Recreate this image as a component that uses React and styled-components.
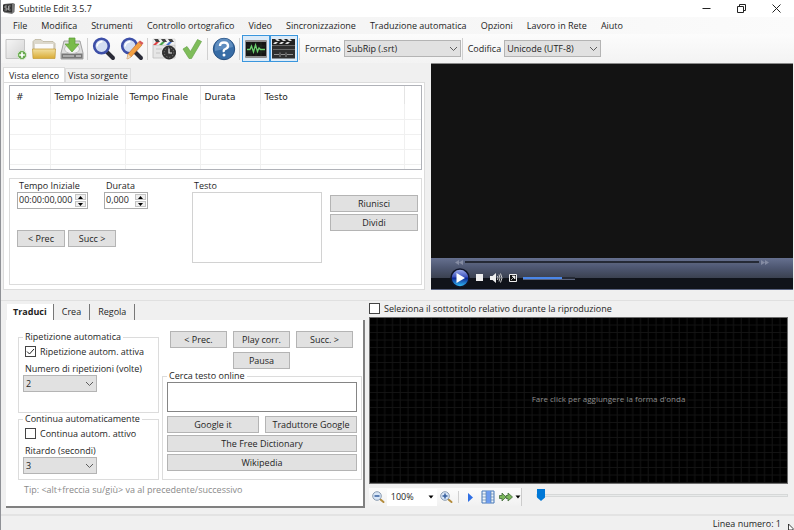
import React, { useState } from 'react'
import styled, { createGlobalStyle, css } from 'styled-components'

const GlobalStyle = createGlobalStyle`
    * {
        box-sizing: border-box;
    }

    body {
        margin: 0;
        background: #f0f0f0;
    }

    body, button, input, select, textarea {
        font-family: 'Open Sans', 'Noto Sans', sans-serif;
        font-size: 9px;
        line-height: 12px;
        color: #1e1e1e;
    }
`

const Window = styled.div`
    position: relative;
    display: flex;
    flex-direction: column;
    min-height: 100vh;
    border-left: 1px solid #8f9196;
    background: #f0f0f0;
    overflow: hidden;
`

const TitleBar = styled.header`
    display: flex;
    align-items: center;
    height: 17px;
    padding-left: 2px;
    background: #fff;
`

const Title = styled.h1`
    flex: 1;
    margin: 0 0 0 4px;
    font-size: 9px;
    font-weight: 400;
`

const WindowButton = styled.button`
    display: flex;
    align-items: center;
    justify-content: center;
    width: 35px;
    height: 15px;
    padding: 0;
    border: 0;
    background: none;
`

const MenuBar = styled.nav`
    display: flex;
    align-items: center;
    height: 17px;
    padding-left: 5px;
    background: linear-gradient(90deg, #f0f0f0, #fbfbfb);
`

const MenuItem = styled.button`
    padding: 0 7px;
    border: 0;
    background: none;
    white-space: nowrap;
`

const Toolbar = styled.div`
    display: flex;
    align-items: center;
    height: 29px;
    padding-left: 1px;
    background: linear-gradient(#fcfcfc, #f3f3f3);
`

const ToolButton = styled.button`
    display: flex;
    flex: none;
    align-items: center;
    justify-content: center;
    width: 28px;
    height: 27px;
    padding: 0;
    border: 1px solid ${p => (p.$active ? '#3a96dd' : 'transparent')};
    background: ${p => (p.$active ? '#dcebf8' : 'none')};
`

const Separator = styled.span`
    flex: none;
    width: 1px;
    height: 22px;
    margin: 0 2px 0 1px;
    background: #d0d0d0;
`

const ToolLabel = styled.label`
    margin: 0 3px;
    white-space: nowrap;
`

const SelectWrap = styled.span`
    display: grid;
    flex: none;
    width: ${p => p.$width}px;

    > * {
        grid-area: 1 / 1;
    }

    svg {
        align-self: center;
        justify-self: end;
        margin-right: 3px;
        pointer-events: none;
    }
`

const NativeSelect = styled.select`
    appearance: none;
    width: 100%;
    height: 17px;
    padding: 0 2px;
    border: 1px solid #b4b4b4;
    border-radius: 0;
    background: #e1e1e1;
`

const Upper = styled.section`
    display: grid;
    grid-template-columns: 422fr 362fr;
    column-gap: 6px;
    padding: 0 1px 0 2px;
`

const ListSide = styled.div`
    display: flex;
    flex-direction: column;
    min-width: 0;
    padding-top: 4px;
`

const TabRow = styled.div`
    display: flex;
    align-items: flex-end;
    height: 15px;
`

const Tab = styled.button`
    height: ${p => (p.$active ? 16 : 14)}px;
    margin-bottom: ${p => (p.$active ? -1 : 0)}px;
    padding: 0 ${p => (p.$active ? 5 : 2)}px;
    border: 1px solid #dcdcdc;
    border-bottom: 0;
    background: ${p => (p.$active ? '#fff' : '#f0f0f0')};
    white-space: nowrap;
`

const TabPanel = styled.div`
    display: flex;
    flex: 1;
    flex-direction: column;
    gap: 8px;
    padding: 2px 2px 4px 5px;
    border: 1px solid #dcdcdc;
    background: #fff;
`

const TableFrame = styled.div`
    height: 85px;
    border: 1px solid #b0b2b8;
    overflow: hidden;
`

const Table = styled.table`
    width: 100%;
    border-collapse: collapse;
    table-layout: fixed;

    th, td {
        padding: 0 4px;
        border-right: 1px solid #f0f0f0;
        text-align: left;
    }

    th:first-child {
        padding-left: 6px;
    }

    th:last-child, td:last-child {
        border-right: 0;
    }

    th {
        height: 18px;
        padding-top: 3px;
        border-color: #e4e4e4;
        font-family: 'DejaVu Sans', sans-serif;
        font-size: 9px;
        font-weight: 400;
        white-space: nowrap;
    }

    td {
        height: 15px;
        border-bottom: 1px solid #f0f0f0;
    }
`

const EditPanel = styled.div`
    display: grid;
    flex: 1;
    grid-template-columns: 167px minmax(0, 1fr) 88px;
    column-gap: 8px;
    min-height: 107px;
    padding: 1px 3px 0 7px;
    border: 1px solid #dcdcdc;
`

const TimeFields = styled.div`
    display: flex;
    gap: 16px;
`

const Field = styled.div`
    display: flex;
    flex-direction: column;

    > label {
        height: 12px;
        padding-left: 2px;
        white-space: nowrap;
    }
`

const Spinner = styled.span`
    display: flex;
    width: ${p => p.$width}px;
    height: 17px;
    padding: 0 1px;
    border: 1px solid #ababab;
    background: #fff;

    input {
        flex: 1;
        min-width: 0;
        padding: 0 0 2px;
        border: 0;
        outline: 0;
    }
`

const SpinButtons = styled.span`
    display: flex;
    flex-direction: column;
    gap: 1px;
    padding: 1px 0;

    button {
        display: flex;
        flex: 1;
        align-items: center;
        justify-content: center;
        width: 11px;
        padding: 0;
        border: 1px solid #c4c4c4;
        background: #eee;
    }
`

const Button = styled.button`
    height: 17px;
    padding: 0 2px;
    border: 1px solid #b4b4b4;
    background: #e1e1e1;
    white-space: nowrap;
    ${p => p.$width && css`width: ${p.$width}px;`}
`

const ButtonRow = styled.div`
    display: flex;
    gap: 3px;
    margin-top: 21px;
`

const ButtonStack = styled.div`
    display: flex;
    flex-direction: column;
    gap: 2px;
    padding-top: 15px;
`

const TextArea = styled.textarea`
    height: 71px;
    border: 1px solid #d2d2d2;
    outline: 0;
    resize: none;
`

const Video = styled.div`
    display: flex;
    flex-direction: column;
    border-top: 1px solid #8a8a8a;
    border-bottom: 1px solid #5a6482;
    background: #131313;
`

const Screen = styled.div`
    flex: 1;
    min-height: 120px;
`

const Player = styled.div`
    height: 31px;
    padding: 0 24px;
    background: linear-gradient(#66708f 0, #4d5670 10px, #3b4150 20px, #10131a 20px, #10131a);
`

const SeekRow = styled.div`
    display: flex;
    align-items: center;
    gap: 2px;
    height: 9px;
`

const Range = styled.input`
    appearance: none;
    flex: ${p => (p.$width ? 'none' : 1)};
    width: ${p => (p.$width ? `${p.$width}px` : 'auto')};
    min-width: 0;
    height: 3px;
    margin: 0;
    border-bottom: 1px solid #59627b;
    background: linear-gradient(90deg, #4a86e8 ${p => p.value}%, #252a36 ${p => p.value}%);

    &::-webkit-slider-thumb {
        appearance: none;
        width: 1px;
        height: 1px;
    }
`

const PlayerRow = styled.div`
    display: flex;
    align-items: center;
    gap: 6px;
    height: 22px;
    margin-left: -5px;
`

const PlayerButton = styled.button`
    display: flex;
    padding: 0;
    border: 0;
    background: none;
`

const Lower = styled.section`
    display: grid;
    flex: 1;
    grid-template-columns: 359px minmax(0, 1fr);
    column-gap: 4px;
    margin-top: 10px;
    padding: 1px 6px 6px 5px;
    border-top: 1px solid #e0e0e0;
`

const Work = styled.div`
    display: flex;
    flex-direction: column;
    padding-top: 2px;
`

const WorkTabs = styled.div`
    display: flex;
    height: 16px;
    padding-left: 1px;
`

const WorkTab = styled.button`
    padding: 0 ${p => (p.$active ? 6 : 8)}px;
    border: 0;
    border-right: 1px solid #777;
    background: ${p => (p.$active ? '#fff' : 'none')};
    font-weight: ${p => (p.$active ? 700 : 400)};
    white-space: nowrap;
`

const WorkPanel = styled.div`
    display: flex;
    flex: 1;
    flex-direction: column;
    padding: 11px 3px 0 12px;
    border: solid #808080;
    border-width: 0 2px 2px 0;
    background: #fff;
`

const WorkColumns = styled.div`
    display: grid;
    grid-template-columns: 141px 200px;
    column-gap: 3px;
`

const Column = styled.div`
    display: flex;
    flex-direction: column;
`

const CheckLabel = styled.label`
    display: flex;
    align-items: center;
    gap: 4px;
    height: 13px;
    white-space: nowrap;
`

const Group = styled.fieldset`
    display: flex;
    flex-direction: column;
    align-items: ${p => (p.$stretch ? 'stretch' : 'flex-start')};
    height: ${p => p.$height}px;
    min-width: 0;
    margin: 0;
    padding: 0 4px;
    border: 1px solid #dcdcdc;

    legend {
        height: 12px;
        padding: 0 2px;
        white-space: nowrap;
    }

    ${CheckLabel} {
        margin: 2px 0 0 2px;
    }
`

const Check = styled.input`
    appearance: none;
    width: 11px;
    height: 11px;
    margin: 0;
    border: 1px solid #444;
    background: #fff;

    &:checked {
        background: #fff
            url("data:image/svg+xml,%3Csvg xmlns='http://www.w3.org/2000/svg' viewBox='0 0 9 9'%3E%3Cpath d='M1 4.5 3.5 7 8 2' fill='none' stroke='%23222'/%3E%3C/svg%3E");
    }
`

const FieldLabel = styled.label`
    margin: 5px 0 0 2px;
    white-space: nowrap;
`

const PlayGrid = styled.div`
    display: grid;
    grid-template-columns: repeat(3, 57px);
    gap: 3px 6px;
    padding-left: 8px;
    height: 39px;

    > :last-child {
        grid-column: 2;
    }
`

const SearchBox = styled.input`
    width: 100%;
    height: 30px;
    margin: 0 0 4px;
    border: 1px solid #858585;
    outline: 0;
`

const SearchGrid = styled.div`
    display: grid;
    grid-template-columns: 1fr 1fr;
    gap: 2px 6px;

    > :nth-child(n + 3) {
        grid-column: 1 / 3;
    }
`

const Tip = styled.p`
    margin: 4px 0 0 6px;
    color: #8a8a8a;
`

const WaveSide = styled.div`
    display: flex;
    flex-direction: column;
    min-width: 0;
`

const Waveform = styled.div`
    display: grid;
    flex: 1;
    min-height: 120px;
    margin-top: 2px;
    border: 1px solid #6d6d6d;
    background: #000;

    > * {
        grid-area: 1 / 1;
        place-self: center;
    }

    svg {
        place-self: stretch;
        width: 100%;
        height: 100%;
    }
`

const WaveHint = styled.p`
    z-index: 1;
    margin: 0;
    padding: 0 0 4px 60px;
    font-size: 8px;
    color: #8c8c8c;
`

const WaveControls = styled.div`
    display: flex;
    align-items: center;
    gap: 14px;
    height: 24px;
    padding-top: 2px;
`

const WaveBar = styled.div`
    display: flex;
    align-items: center;
    flex: none;
    width: 153px;
    height: 18px;
    border-right: 1px solid #ccc;
    background: linear-gradient(#fcfcfc, #f1f1f1);

    ${Separator} {
        height: 12px;
        margin: 0 3px;
    }
`

const WaveButton = styled.button`
    display: flex;
    align-items: center;
    justify-content: center;
    width: 18px;
    height: 18px;
    padding: 0;
    border: 0;
    background: none;
`

const ZoomWrap = styled(SelectWrap)`
    ${NativeSelect} {
        border: 0;
        background: #fff;
        padding: 0 4px;
    }
`

const Position = styled.input`
    appearance: none;
    flex: 1;
    min-width: 0;
    height: 3px;
    margin: 0 0 4px;
    border: 1px solid #d6d8d8;
    background: #e8eaea;

    &::-webkit-slider-thumb {
        appearance: none;
        width: 8px;
        height: 12px;
        background: #0078d7;
        clip-path: polygon(0 0, 100% 0, 100% 70%, 50% 100%, 0 70%);
    }
`

const StatusBar = styled.footer`
    display: flex;
    align-items: center;
    justify-content: flex-end;
    height: 16px;
    padding: 2px 13px 0 0;
    border-top: 2px solid #e3e3e3;
`

const Pointer = styled.svg`
    position: absolute;
    right: 0;
    bottom: 0;
`

const Chevron = () => (
    <svg width="9" height="6" viewBox="0 0 9 6">
        <path d="M1 1 4.5 4.500 8 1" fill="none" stroke="#5c5c5c" strokeWidth="1" />
    </svg>
)

const SmallArrow = () => (
    <svg width="6" height="4" viewBox="0 0 6 4">
        <path d="M.5.5h5L3 3.5Z" fill="#000" />
    </svg>
)

const AppIcon = () => (
    <svg width="12" height="11" viewBox="0 0 12 11">
        <path d="M1 1 10 0 12 1 11.5 9 9 11 1 9.500Z" fill="#777" />
        <path d="M0 1.500 9 1 9 9.500 0 8.500Z" fill="#333" />
        <path d="M4 3H2V5H4V7H1.500M7.500 3H5.500V7H7.500M5.500 5H7" fill="none" stroke="#bbb" strokeWidth=".8" />
    </svg>
)

const NewIcon = () => (
    <svg width="24" height="24" viewBox="0 0 24 24">
        <defs>
            <linearGradient id="paper" x2="1" y2="1">
                <stop stopColor="#f6f6f6" />
                <stop offset="1" stopColor="#d2d2d2" />
            </linearGradient>
        </defs>
        <path d="M2 2.500H20.500V21.500H2Z" fill="url(#paper)" stroke="#c4c4c4" />
        <circle cx="18" cy="18" r="4.500" fill="#67a94e" stroke="#d9ecd2" />
        <path d="M18 15.200V20.800M15.200 18H20.800" stroke="#fff" strokeWidth="1.700" />
    </svg>
)

const OpenIcon = () => (
    <svg width="26" height="24" viewBox="0 0 26 24">
        <defs>
            <linearGradient id="folder" x2="0" y2="1">
                <stop stopColor="#f2e0a0" />
                <stop offset="1" stopColor="#d9ab35" />
            </linearGradient>
        </defs>
        <path d="M2 13V4.500L4 2.500H10L12 4.500H22L24 6.500V13Z" fill="#dcd8cc" stroke="#b5ad94" strokeWidth=".7" />
        <path d="M4 7H22V13H4Z" fill="#fafafa" />
        <path d="M1.500 12H24.500L24 21.500H2Z" fill="url(#folder)" stroke="#c29a35" strokeWidth=".7" />
    </svg>
)

const SaveIcon = () => (
    <svg width="24" height="24" viewBox="0 0 24 24">
        <path d="M4 4H20L23 16V22H1V16Z" fill="#dedede" stroke="#8f8f8f" strokeWidth=".8" />
        <path d="M1.500 16.500H22.500V21.500H1.500Z" fill="#777" />
        <path d="M3 18H14V20H3Z" fill="#aaa" />
        <path d="M16 19H21" stroke="#ddd" strokeWidth="1.200" />
        <ellipse cx="12" cy="12" rx="7.500" ry="4.500" fill="#f4f4f4" stroke="#b6b6b6" strokeWidth=".8" />
        <path d="M9 1H15V7H19L12 15 5 7H9Z" fill="#79bb4b" stroke="#5a9b35" strokeWidth=".7" />
    </svg>
)

const Lens = () => (
    <>
        <path d="m15 15 6 6" stroke="#2a2b38" strokeWidth="4" strokeLinecap="round" />
        <circle cx="9.500" cy="9" r="7.300" fill="#d3def2" stroke="#3d4fa8" strokeWidth="2.600" />
        <path d="M5 9.500Q5.500 5 10.500 4.500" fill="none" stroke="#fff" strokeWidth="1.500" />
    </>
)

const FindIcon = () => (
    <svg width="24" height="24" viewBox="0 0 24 24">
        <Lens />
    </svg>
)

const ReplaceIcon = () => (
    <svg width="24" height="24" viewBox="0 0 24 24">
        <Lens />
        <path d="M18.500 5 22 8 11 20 7 22 8 17Z" fill="#f3a041" stroke="#b9652a" strokeWidth=".6" />
        <path d="m18.500 5 1.500-1.500L23.500 6 22 8Z" fill="#d75858" />
        <path d="m8 17 3 3-4 2Z" fill="#eddaba" />
    </svg>
)

const SyncIcon = () => (
    <svg width="26" height="24" viewBox="0 0 26 24">
        <path d="M2 8H24V21H2Z" fill="#e6e6e6" stroke="#bcbcbc" strokeWidth=".8" />
        <path d="M2 2H24V8H2Z" fill="#f4f4f4" stroke="#ccc" strokeWidth=".6" />
        <path d="M3 2H7L9 5H5ZM10 2H14L16 5H12ZM17 2H21L23 5H19Z" fill="#444" />
        <path d="M2 8 5 5H8L5 8Z" fill="#d44" />
        <path d="M8 8 11 5H14L11 8Z" fill="#49a34a" />
        <path d="M15 8 18 5H21L18 8Z" fill="#4573cc" />
        <path d="M5 12H11M5 16H9" stroke="#c4c4c4" />
        <circle cx="18" cy="15.500" r="6.500" fill="#343434" stroke="#222" />
        <circle cx="18" cy="15.500" r="4.800" fill="none" stroke="#aaa" strokeWidth=".7" strokeDasharray="1 2" />
        <path d="M18 11.500V16H21" fill="none" stroke="#eee" strokeWidth="1.200" />
    </svg>
)

const CheckIcon = () => (
    <svg width="24" height="24" viewBox="0 0 24 24">
        <path d="M3 12 7 9.500 10.500 14.500 17.500 2.500 21.500 4.500 11.500 21.500H9Z" fill="#7fbd5a" stroke="#69a34a" strokeWidth=".7" />
    </svg>
)

const HelpIcon = () => (
    <svg width="24" height="24" viewBox="0 0 24 24">
        <circle cx="12" cy="12" r="10.700" fill="#386da6" stroke="#244e80" />
        <path d="M3 10a9 8.500 0 0 1 18 0Q12 12 3 14Z" fill="#5f8dbf" />
        <path d="M8 9Q8 5.500 12 5.500T16 9Q16 11 13.500 12T12 15" fill="none" stroke="#fff" strokeWidth="2.400" />
        <circle cx="12" cy="18" r="1.500" fill="#fff" />
    </svg>
)

const WaveIcon = () => (
    <svg width="24" height="22" viewBox="0 0 24 22">
        <rect x="1" y="2" width="22" height="18" rx="1" fill="#8d8d8d" />
        <rect x="2" y="4" width="20" height="14" fill="#151515" />
        <path d="M7 4V18M12 4V18M17 4V18M3 8H21M3 14H21" stroke="#263a29" strokeWidth=".6" />
        <path d="M3 11.500H6L7.500 8 9.500 14 11.500 7 13.500 13.500 15 10 16.500 11.500H21" fill="none" stroke="#6bd16e" strokeWidth="1.300" />
    </svg>
)

const ClapperIcon = () => (
    <svg width="26" height="24" viewBox="0 0 26 24">
        <path d="M1 2H24V8H1Z" fill="#222" />
        <path d="m4 2 2 2H9L7 2Zm6 0 2 2h3l-2-2Zm6 0 2 2h3l-2-2ZM2 7l2-2h3L5 7Zm6 0 2-2h3l-2 2Zm6 0 2-2h3l-2 2Z" fill="#ddd" />
        <path d="M1 8H24V21.500H1Z" fill="#2e2e2e" />
        <path d="M1 8.500H24M2 12.500H24" stroke="#666" />
        <path d="M3 17.500H8M10 17.500H14M16 17.500H22M9 15.500V20M15 15.500V20" stroke="#aaa" strokeWidth=".8" />
    </svg>
)

const ZoomIcon = ({ plus }) => (
    <svg width="14" height="14" viewBox="0 0 14 14">
        <path d="m9.500 9.500 3 2.500" stroke="#b48c3c" strokeWidth="2" strokeLinecap="round" />
        <circle cx="6" cy="6" r="4.300" fill="#d8e6f7" stroke="#8a9bb0" />
        <path d={plus ? 'M3.500 6h5M6 3.500v5' : 'M3.500 6h5'} stroke="#355d9c" strokeWidth="1.500" />
    </svg>
)

const ColumnsIcon = () => (
    <svg width="14" height="14" viewBox="0 0 14 14">
        <path d="M1 1H13V13H1Z" fill="#eef4fb" stroke="#4477b7" />
        <path d="M5 1H10V13H5Z" fill="#6c9bee" />
        <path d="M1 4H5M1 7H5M1 10H5M10 4H13M10 7H13M10 10H13M5 1V13M10 1V13" stroke="#5b83ae" strokeWidth=".7" />
    </svg>
)

const FastIcon = () => (
    <svg width="14" height="10" viewBox="0 0 14 10">
        <path d="M.5 3.500H3V1L7 5 3 9V6.500H.5ZM7 3.500H9V1L13.500 5 9 9V6.500H7Z" fill="#7bb75c" stroke="#41693a" strokeWidth=".8" />
    </svg>
)

const PlayIcon = () => (
    <svg width="20" height="20" viewBox="0 0 20 20">
        <defs>
            <linearGradient id="orb" x2="0" y2="1">
                <stop stopColor="#a5b3ef" />
                <stop offset=".45" stopColor="#3b51bd" />
                <stop offset=".5" stopColor="#0b2392" />
                <stop offset="1" stopColor="#35c9ff" />
            </linearGradient>
        </defs>
        <circle cx="10" cy="10" r="9" fill="url(#orb)" stroke="#10152a" strokeWidth="1.500" />
        <path d="M6.500 5 15 10 6.500 15Z" fill="#fff" />
    </svg>
)

const VolumeIcon = () => (
    <svg width="13" height="10" viewBox="0 0 13 10">
        <path d="M0 3H2.500L6 0V10L2.500 7H0Z" fill="#eee" />
        <path d="M7.500 3Q8.500 5 7.500 7M9 1.500Q11 5 9 8.500M10.500.5Q13.500 5 10.500 9.500" fill="none" stroke="#ccc" />
    </svg>
)

const FullIcon = () => (
    <svg width="8" height="8" viewBox="0 0 8 8">
        <path d="M.5.5H7.500V7.500H.5Z" fill="#111" stroke="#eee" />
        <path d="M3 2H6V5ZM2 6 4.500 3.500" fill="#eee" stroke="#eee" strokeWidth=".7" />
    </svg>
)

const DoubleArrow = ({ back }) => (
    <svg width="8" height="5" viewBox="0 0 8 5">
        <path d={back ? 'M4 0V5L0 2.500ZM8 0V5L4 2.500Z' : 'M0 0V5L4 2.500ZM4 0V5L8 2.500Z'} fill="#858ca3" />
    </svg>
)

const WaveGrid = () => (
    <svg>
        <pattern id="grid" width="7.750" height="7.500" patternUnits="userSpaceOnUse">
            <path d="M7 0V7.500M0 7H7.750" stroke="#141414" strokeWidth="1" />
        </pattern>
        <rect width="100%" height="100%" fill="url(#grid)" />
    </svg>
)

const Select = ({ id, width, options, ...rest }) => (
    <SelectWrap $width={width}>
        <NativeSelect id={id} {...rest}>
            {options.map(o => (
                <option key={o}>{o}</option>
            ))}
        </NativeSelect>
        <Chevron />
    </SelectWrap>
)

const NumberSpinner = ({ id, width, value }) => (
    <Spinner $width={width}>
        <input id={id} defaultValue={value} />
        <SpinButtons>
            <button aria-label="Aumenta">
                <svg width="5" height="3"><path d="M0 3 2.500 0 5 3Z" /></svg>
            </button>
            <button aria-label="Diminuisci">
                <svg width="5" height="3"><path d="M0 0 2.500 3 5 0Z" /></svg>
            </button>
        </SpinButtons>
    </Spinner>
)

const menu = [
    'File',
    'Modifica',
    'Strumenti',
    'Controllo ortografico',
    'Video',
    'Sincronizzazione',
    'Traduzione automatica',
    'Opzioni',
    'Lavoro in Rete',
    'Aiuto',
]

const tools = [
    [['Nuovo', NewIcon], ['Apri', OpenIcon], ['Salva', SaveIcon]],
    [['Trova', FindIcon], ['Sostituisci', ReplaceIcon]],
    [['Sincronizza', SyncIcon], ['Controlla', CheckIcon]],
    [['Guida', HelpIcon]],
]

const columns = [
    ['#', 40],
    ['Tempo Iniziale', 75],
    ['Tempo Finale', 75],
    ['Durata', 60],
    ['Testo', null],
    ['', 17],
]

function SubtitleTable() {
    return (
        <TableFrame>
            <Table>
                <colgroup>
                    {columns.map(([name, width]) => (
                        <col key={name} width={width || undefined} />
                    ))}
                </colgroup>
                <thead>
                    <tr>
                        {columns.map(([name]) => (
                            <th key={name}>{name}</th>
                        ))}
                    </tr>
                </thead>
                <tbody>
                    {[0, 1, 2, 3, 4].map(row => (
                        <tr key={row}>
                            {columns.map(([name]) => (
                                <td key={name} />
                            ))}
                        </tr>
                    ))}
                </tbody>
            </Table>
        </TableFrame>
    )
}

function VideoPlayer() {
    const [seek, setSeek] = useState(0)
    const [volume, setVolume] = useState(75)

    return (
        <Video>
            <Screen />
            <Player>
                <SeekRow>
                    <DoubleArrow back />
                    <Range type="range" aria-label="Posizione" value={seek} onChange={e => setSeek(e.target.value)} />
                    <DoubleArrow />
                </SeekRow>
                <PlayerRow>
                    <PlayerButton aria-label="Riproduci"><PlayIcon /></PlayerButton>
                    <PlayerButton aria-label="Ferma">
                        <svg width="8" height="8"><rect width="7" height="7" fill="#eee" /></svg>
                    </PlayerButton>
                    <PlayerButton aria-label="Audio"><VolumeIcon /></PlayerButton>
                    <PlayerButton aria-label="Schermo intero"><FullIcon /></PlayerButton>
                    <Range
                        type="range"
                        aria-label="Volume"
                        $width={52}
                        value={volume}
                        onChange={e => setVolume(e.target.value)}
                    />
                </PlayerRow>
            </Player>
        </Video>
    )
}

function TranslatePanel() {
    return (
        <Work>
            <WorkTabs>
                <WorkTab $active>Traduci</WorkTab>
                <WorkTab>Crea</WorkTab>
                <WorkTab>Regola</WorkTab>
            </WorkTabs>
            <WorkPanel>
                <WorkColumns>
                    <Column>
                        <Group $height={82}>
                            <legend>Ripetizione automatica</legend>
                            <CheckLabel>
                                <Check type="checkbox" defaultChecked />
                                Ripetizione autom. attiva
                            </CheckLabel>
                            <FieldLabel htmlFor="repeat">Numero di ripetizioni (volte)</FieldLabel>
                            <Select id="repeat" width={74} options={['2', '3', '4']} />
                        </Group>
                        <Group $height={67}>
                            <legend>Continua automaticamente</legend>
                            <CheckLabel>
                                <Check type="checkbox" />
                                Continua autom. attivo
                            </CheckLabel>
                            <FieldLabel htmlFor="delay">Ritardo (secondi)</FieldLabel>
                            <Select id="delay" width={74} options={['3', '4', '5']} />
                        </Group>
                    </Column>
                    <Column>
                        <PlayGrid>
                            <Button>&lt; Prec.</Button>
                            <Button>Play corr.</Button>
                            <Button>Succ. &gt;</Button>
                            <Button>Pausa</Button>
                        </PlayGrid>
                        <Group $height={110} $stretch>
                            <legend>Cerca testo online</legend>
                            <SearchBox aria-label="Cerca testo online" />
                            <SearchGrid>
                                <Button>Google it</Button>
                                <Button>Traduttore Google</Button>
                                <Button>The Free Dictionary</Button>
                                <Button>Wikipedia</Button>
                            </SearchGrid>
                        </Group>
                    </Column>
                </WorkColumns>
                <Tip>Tip: &lt;alt+freccia su/giù&gt; va al precedente/successivo</Tip>
            </WorkPanel>
        </Work>
    )
}

function WavePanel() {
    return (
        <WaveSide>
            <CheckLabel>
                <Check type="checkbox" />
                Seleziona il sottotitolo relativo durante la riproduzione
            </CheckLabel>
            <Waveform>
                <WaveGrid />
                <WaveHint>Fare click per aggiungere la forma d'onda</WaveHint>
            </Waveform>
            <WaveControls>
                <WaveBar>
                    <WaveButton aria-label="Riduci"><ZoomIcon /></WaveButton>
                    <ZoomWrap $width={50}>
                        <NativeSelect aria-label="Zoom">
                            <option>100%</option>
                        </NativeSelect>
                        <SmallArrow />
                    </ZoomWrap>
                    <WaveButton aria-label="Ingrandisci"><ZoomIcon plus /></WaveButton>
                    <Separator />
                    <WaveButton aria-label="Riproduci">
                        <svg width="7" height="9"><path d="M1 0 6 4.500 1 9Z" fill="#2f6fe4" /></svg>
                    </WaveButton>
                    <WaveButton aria-label="Colonne"><ColumnsIcon /></WaveButton>
                    <WaveButton aria-label="Avanti"><FastIcon /></WaveButton>
                    <SmallArrow />
                </WaveBar>
                <Position type="range" aria-label="Posizione forma d'onda" defaultValue="0" />
            </WaveControls>
        </WaveSide>
    )
}

export default function App() {
    return (
        <Window>
            <GlobalStyle />
            <TitleBar>
                <AppIcon />
                <Title>Subtitle Edit 3.5.7</Title>
                <WindowButton aria-label="Riduci a icona">
                    <svg width="9" height="9"><path d="M.5 4.500H8.500" stroke="#222" /></svg>
                </WindowButton>
                <WindowButton aria-label="Ripristina">
                    <svg width="9" height="9">
                        <path d="M.5 2.500H6.500V8.500H.5ZM2.500 2V.5H8.500V6.500H7" fill="none" stroke="#222" />
                    </svg>
                </WindowButton>
                <WindowButton aria-label="Chiudi">
                    <svg width="9" height="9"><path d="m.5.5 8 8m0-8-8 8" stroke="#222" /></svg>
                </WindowButton>
            </TitleBar>
            <MenuBar>
                {menu.map(name => (
                    <MenuItem key={name}>{name}</MenuItem>
                ))}
            </MenuBar>
            <Toolbar>
                {tools.map((group, i) => (
                    <React.Fragment key={i}>
                        {group.map(([name, Icon]) => (
                            <ToolButton key={name} aria-label={name}>
                                <Icon />
                            </ToolButton>
                        ))}
                        <Separator />
                    </React.Fragment>
                ))}
                <ToolButton $active aria-label="Forma d'onda"><WaveIcon /></ToolButton>
                <ToolButton $active aria-label="Video"><ClapperIcon /></ToolButton>
                <Separator />
                <ToolLabel htmlFor="format">Formato</ToolLabel>
                <Select id="format" width={117} options={['SubRip (.srt)']} />
                <Separator />
                <ToolLabel htmlFor="encoding">Codifica</ToolLabel>
                <Select id="encoding" width={97} options={['Unicode (UTF-8)']} />
            </Toolbar>
            <Upper>
                <ListSide>
                    <TabRow>
                        <Tab $active>Vista elenco</Tab>
                        <Tab>Vista sorgente</Tab>
                    </TabRow>
                    <TabPanel>
                        <SubtitleTable />
                        <EditPanel>
                            <div>
                                <TimeFields>
                                    <Field>
                                        <label htmlFor="start">Tempo Iniziale</label>
                                        <NumberSpinner id="start" width={71} value="00:00:00,000" />
                                    </Field>
                                    <Field>
                                        <label htmlFor="duration">Durata</label>
                                        <NumberSpinner id="duration" width={44} value="0,000" />
                                    </Field>
                                </TimeFields>
                                <ButtonRow>
                                    <Button $width={48}>&lt; Prec</Button>
                                    <Button $width={48}>Succ &gt;</Button>
                                </ButtonRow>
                            </div>
                            <Field>
                                <label htmlFor="text">Testo</label>
                                <TextArea id="text" />
                            </Field>
                            <ButtonStack>
                                <Button>Riunisci</Button>
                                <Button>Dividi</Button>
                            </ButtonStack>
                        </EditPanel>
                    </TabPanel>
                </ListSide>
                <VideoPlayer />
            </Upper>
            <Lower>
                <TranslatePanel />
                <WavePanel />
            </Lower>
            <StatusBar>Linea numero: 1</StatusBar>
            <Pointer width="6" height="6" viewBox="0 0 6 6">
                <path d="M.5 0V6H5V4.500Z" fill="#fff" stroke="#111" strokeWidth=".8" />
            </Pointer>
        </Window>
    )
}
